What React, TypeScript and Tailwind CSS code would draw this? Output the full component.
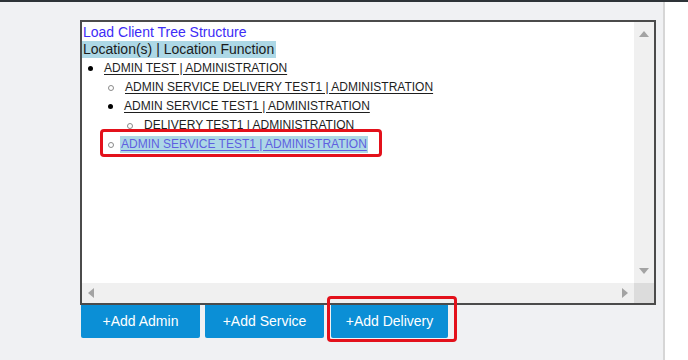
import React from "react";

type Node = {
    label: string;
    level: number;
    filled: boolean;
    selected?: boolean;
};

const nodes: Node[] = [
    { label: "ADMIN TEST | ADMINISTRATION", level: 0, filled: true },
    { label: "ADMIN SERVICE DELIVERY TEST1 | ADMINISTRATION", level: 1, filled: false },
    { label: "ADMIN SERVICE TEST1 | ADMINISTRATION", level: 1, filled: true },
    { label: "DELIVERY TEST1 | ADMINISTRATION", level: 2, filled: false },
    { label: "ADMIN SERVICE TEST1 | ADMINISTRATION", level: 1, filled: false, selected: true },
];

const indent = ["pl-[6px]", "pl-[26px]", "pl-[45px]"];

function Bullet({ filled }: { filled: boolean }) {
    return filled ? (
        <span className="w-[5px] h-[5px] rounded-full bg-black shrink-0" />
    ) : (
        <span className="w-[6px] h-[6px] rounded-full border border-[#8a8a8a] shrink-0" />
    );
}

function TreeRow({ node }: { node: Node }) {
    return (
        <div className={`relative flex items-center h-[19px] ${indent[node.level]}`}>
            <Bullet filled={node.filled} />
            {node.selected ? (
                <span className="ml-[6px] px-[1px] bg-[#add8e6] text-[#5f5fe0] underline underline-offset-2 leading-[17px]">
                    {node.label}
                </span>
            ) : (
                <span className="ml-[11px] text-[#1e1e1e] underline underline-offset-2 leading-[17px]">
                    {node.label}
                </span>
            )}
            {/* red highlight */}
            {node.selected && (
                <div className="absolute left-[18px] top-[-6px] w-[282px] h-[28px] border-[3px] border-[#e3111b] rounded-[4px]" />
            )}
        </div>
    );
}

export default function App() {
    const buttons = ["+Add Admin", "+Add Service", "+Add Delivery"];

    return (
        <div className="w-[688px] h-[360px] flex flex-col overflow-hidden" style={{ fontFamily: '"Liberation Sans", Arial, sans-serif' }}>
            <div className="h-[2px] bg-[#2e3338]" />
            <div className="flex flex-1">
                <div className="w-[663px] bg-[#f0f1f3] pl-[80px] pt-[18px]">
                    {/* tree panel */}
                    <div className="w-[576px] h-[285px] border-2 border-[#4b4b4b] bg-white flex flex-col">
                        <div className="flex flex-1 min-h-0">
                            <div className="flex-1 flex flex-col pt-[1px]">
                                <div className="text-[14px] leading-[18px] text-[#3d2cf6] pl-[1px]">Load Client Tree Structure</div>
                                <div className="self-start text-[14px] leading-[17px] text-[#1b1b1b] bg-[#add8e6] pl-[1px] pr-[2px]">
                                    Location(s) | Location Function
                                </div>
                                <div className="text-[12px] pt-[1px]">
                                    {nodes.map((n, i) => (
                                        <TreeRow key={i} node={n} />
                                    ))}
                                </div>
                            </div>
                            {/* vertical scrollbar */}
                            <div className="w-[20px] bg-[#f0f0f0] flex flex-col items-center justify-between py-[9px]">
                                <svg width="10" height="6" viewBox="0 0 10 6"><path d="M5 0 L10 6 L0 6 Z" fill="#a3a3a3" /></svg>
                                <svg width="10" height="6" viewBox="0 0 10 6"><path d="M0 0 L10 0 L5 6 Z" fill="#a3a3a3" /></svg>
                            </div>
                        </div>
                        {/* horizontal scrollbar */}
                        <div className="h-[20px] flex">
                            <div className="flex-1 bg-[#f0f0f0] flex items-center justify-between px-[6px]">
                                <svg width="6" height="10" viewBox="0 0 6 10"><path d="M6 0 L6 10 L0 5 Z" fill="#a3a3a3" /></svg>
                                <svg width="6" height="10" viewBox="0 0 6 10"><path d="M0 0 L6 5 L0 10 Z" fill="#a3a3a3" /></svg>
                            </div>
                            <div className="w-[20px] bg-[#dcdcdc]" />
                        </div>
                    </div>

                    {/* buttons */}
                    <div className="flex gap-[5px] pl-[1px]">
                        {buttons.map((b, i) => (
                            <div key={b} className="relative">
                                <button className={`h-[33px] ${i === 2 ? "ml-[2px] w-[117px]" : "w-[119px]"} bg-[#0b8fd6] text-white text-[14px] rounded-b-[2px]`}>
                                    {b}
                                </button>
                                {i === 2 && (
                                    <div className="absolute left-[-2px] top-[-9px] w-[130px] h-[46px] border-[3px] border-[#e3111b] rounded-[4px]" />
                                )}
                            </div>
                        ))}
                    </div>
                </div>
                <div className="w-[2px] bg-[#d6d6d6]" />
                <div className="flex-1 bg-white" />
            </div>
        </div>
    );
}
